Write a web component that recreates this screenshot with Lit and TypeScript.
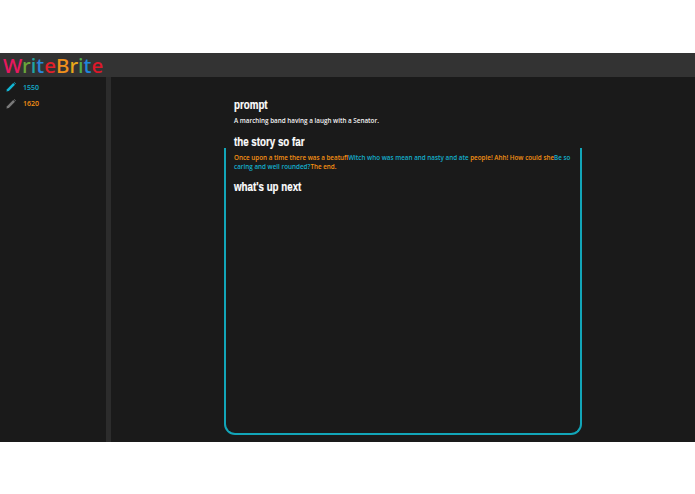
import { LitElement, css, html } from 'lit';
import { customElement } from 'lit/decorators.js';

const LOGO: [string, string][] = [
  ['W', '#e8185f'],
  ['r', '#6aa63a'],
  ['i', '#1fa5a5'],
  ['t', '#2a86d8'],
  ['e', '#e4202a'],
  ['B', '#f0901c'],
  ['r', '#e8a81a'],
  ['i', '#4fac4a'],
  ['t', '#1f86dc'],
  ['e', '#dc182a'],
];

const pencil = (color: string) => html`
  <svg class="pencil" viewBox="0 0 12 12" width="10" height="10">
    <path d="M0.5 11.5 L1.2 8.6 L8.6 1.2 L10.8 3.4 L3.4 10.8 Z" fill=${color}></path>
    <path d="M9.3 0.5 L10.2 0.2 L11.8 1.8 L11.5 2.7 Z" fill=${color}></path>
  </svg>
`;

@customElement('app-root')
export class AppRoot extends LitElement {
  static styles = css`
    :host {
      display: block;
      width: 695px;
      height: 494px;
      background: #fff;
      padding-top: 53px;
      box-sizing: border-box;
      font-family: 'Open Sans', 'Noto Sans', sans-serif;
    }

    .bar {
      height: 24px;
      background: #333;
      display: flex;
      align-items: center;
      padding-left: 3px;
    }

    .logo {
      font-family: 'Noto Sans', 'Open Sans', sans-serif;
      font-size: 20.5px;
      font-weight: 500;
      line-height: 24px;
    }

    .body {
      height: 365px;
      background: #1a1a1a;
      display: flex;
    }

    .side {
      width: 106px;
      box-sizing: border-box;
      padding: 2px 0 0 6px;
    }

    .rule {
      width: 5px;
      background: #2c2c2c;
    }

    .score {
      display: flex;
      align-items: center;
      height: 16px;
      margin-bottom: 0.5px;
      font-size: 7px;
      font-weight: 600;
    }

    .pencil {
      margin-right: 7px;
      flex: none;
    }

    .cyan {
      color: #14aecb;
    }

    .orange {
      color: #f59014;
    }

    .main {
      flex: 1;
      position: relative;
      padding: 20px 0 0 123px;
    }

    h2 {
      margin: 0;
      color: #fff;
      font-family: 'Liberation Sans', Arial, sans-serif;
      font-size: 13px;
      line-height: 15px;
      font-weight: 700;
      -webkit-text-stroke: 0.2px #fff;
      transform: scaleX(0.75);
      transform-origin: left center;
    }

    p {
      margin: 0;
      font-size: 6.3px;
      line-height: 9.5px;
      font-weight: 600;
      width: 342px;
    }

    .prompt {
      color: #f2f2f2;
      margin: 4px 0 8px;
    }

    .story {
      margin: 4px 0 7px;
    }

    .box {
      position: absolute;
      left: 113px;
      top: 71px;
      width: 358px;
      height: 287px;
      box-sizing: border-box;
      border: 2px solid #12a5b8;
      border-top: 0;
      border-radius: 0 0 11px 11px;
      pointer-events: none;
    }
  `;

  render() {
    return html`
      <div class="bar">
        <div class="logo">${LOGO.map(([ch, c]) => html`<span style="color:${c}">${ch}</span>`)}</div>
      </div>
      <div class="body">
        <div class="side">
          <div class="score cyan">${pencil('#12b5d4')}1550</div>
          <div class="score orange">${pencil('#7a7a7a')}1620</div>
        </div>
        <div class="rule"></div>
        <div class="main">
          <div class="box"></div>
          <h2>prompt</h2>
          <p class="prompt">A marching band having a laugh with a Senator.</p>
          <h2>the story so far</h2>
          <p class="story"><span class="orange">Once upon a time there was a beatufl</span><span class="cyan">Witch who was mean and nasty and ate </span><span class="orange">people! Ahh! How could she</span><span class="cyan">Be so caring and well rounded?</span><span class="orange">The end.</span></p>
          <h2>what's up next</h2>
        </div>
      </div>
    `;
  }
}

declare global {
  interface HTMLElementTagNameMap {
    'app-root': AppRoot;
  }
}
